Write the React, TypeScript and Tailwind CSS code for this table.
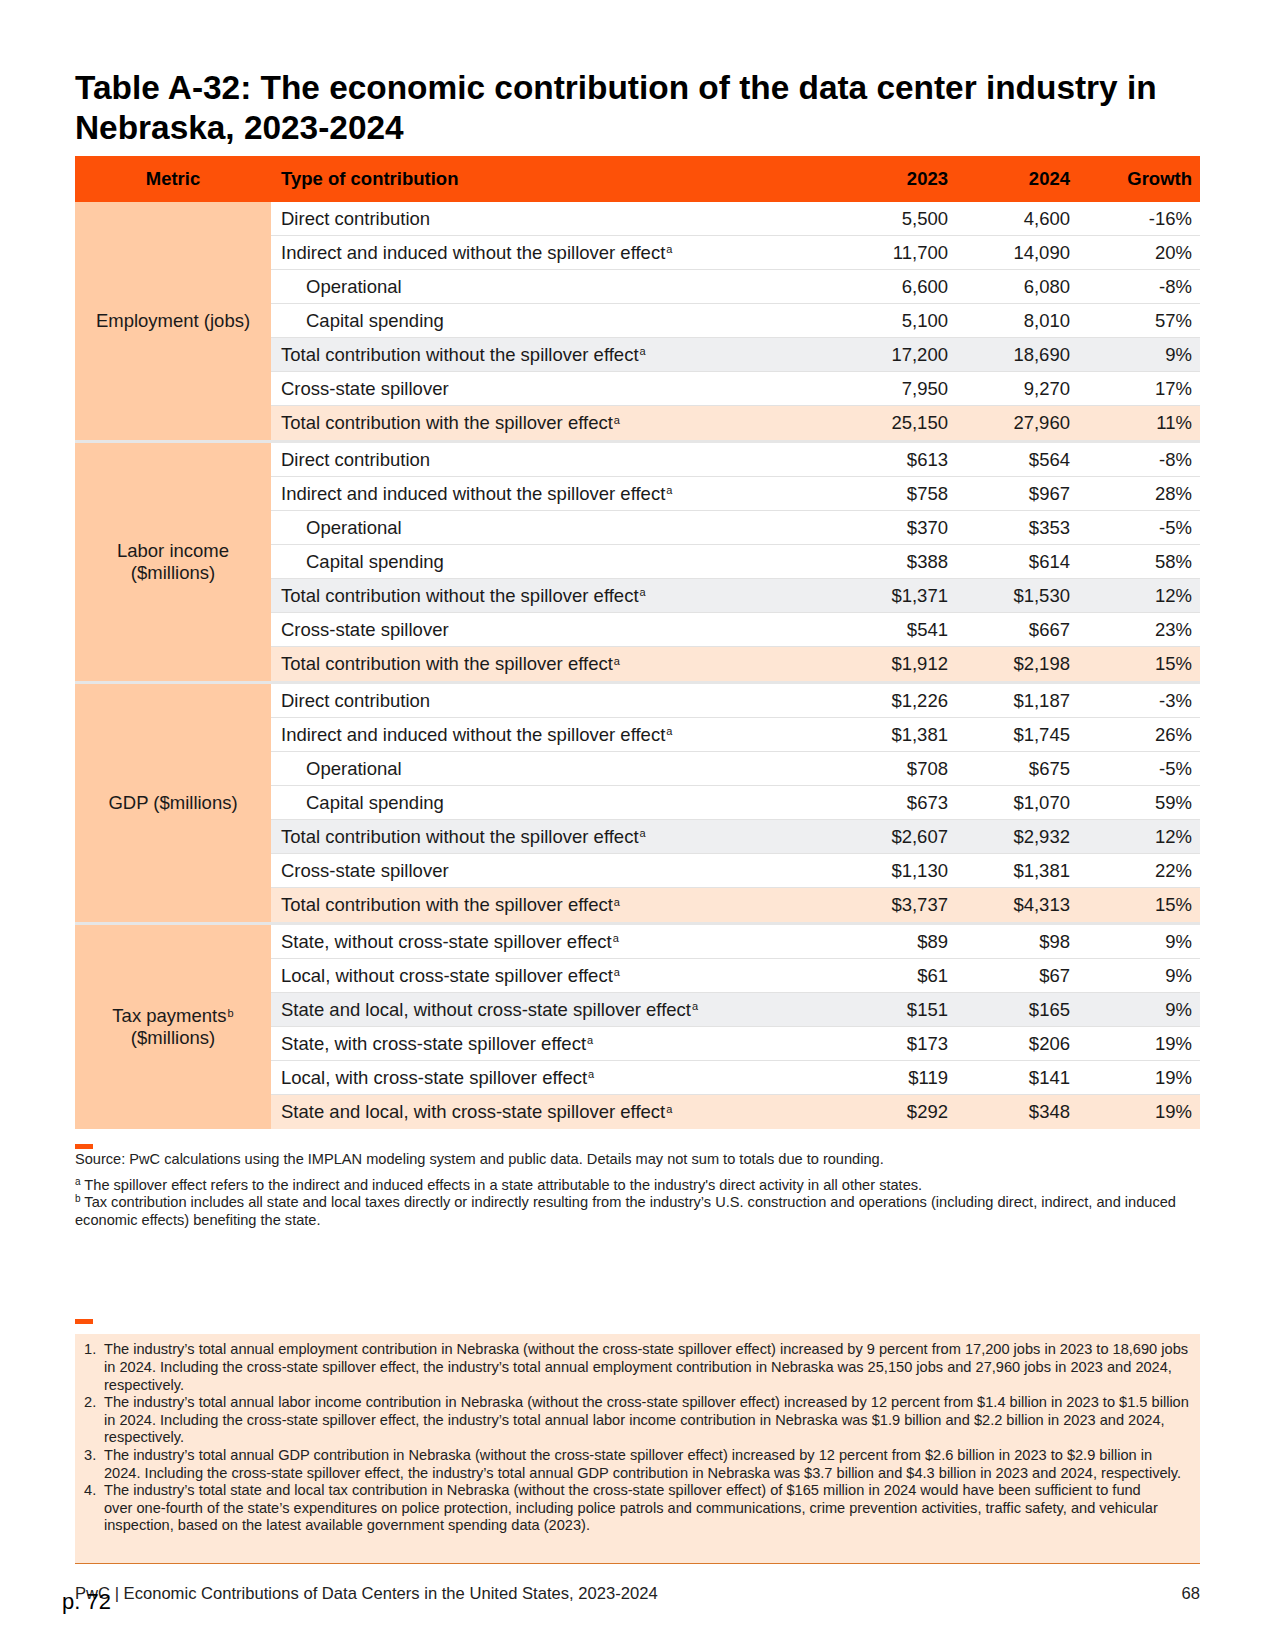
import React from 'react';

type Row = {
  label: React.ReactNode;
  v23: string;
  v24: string;
  growth: string;
  indent?: boolean;
  tone?: 'gray' | 'peach';
};

type Group = {
  metric: React.ReactNode;
  rows: Row[];
};

const A = () => <sup className="text-[11px] ml-[1px]">a</sup>;

const groups: Group[] = [
  {
    metric: 'Employment (jobs)',
    rows: [
      { label: 'Direct contribution', v23: '5,500', v24: '4,600', growth: '-16%' },
      { label: <>Indirect and induced without the spillover effect<A /></>, v23: '11,700', v24: '14,090', growth: '20%' },
      { label: 'Operational', v23: '6,600', v24: '6,080', growth: '-8%', indent: true },
      { label: 'Capital spending', v23: '5,100', v24: '8,010', growth: '57%', indent: true },
      { label: <>Total contribution without the spillover effect<A /></>, v23: '17,200', v24: '18,690', growth: '9%', tone: 'gray' },
      { label: 'Cross-state spillover', v23: '7,950', v24: '9,270', growth: '17%' },
      { label: <>Total contribution with the spillover effect<A /></>, v23: '25,150', v24: '27,960', growth: '11%', tone: 'peach' },
    ],
  },
  {
    metric: (
      <>
        Labor income
        <br />
        ($millions)
      </>
    ),
    rows: [
      { label: 'Direct contribution', v23: '$613', v24: '$564', growth: '-8%' },
      { label: <>Indirect and induced without the spillover effect<A /></>, v23: '$758', v24: '$967', growth: '28%' },
      { label: 'Operational', v23: '$370', v24: '$353', growth: '-5%', indent: true },
      { label: 'Capital spending', v23: '$388', v24: '$614', growth: '58%', indent: true },
      { label: <>Total contribution without the spillover effect<A /></>, v23: '$1,371', v24: '$1,530', growth: '12%', tone: 'gray' },
      { label: 'Cross-state spillover', v23: '$541', v24: '$667', growth: '23%' },
      { label: <>Total contribution with the spillover effect<A /></>, v23: '$1,912', v24: '$2,198', growth: '15%', tone: 'peach' },
    ],
  },
  {
    metric: 'GDP ($millions)',
    rows: [
      { label: 'Direct contribution', v23: '$1,226', v24: '$1,187', growth: '-3%' },
      { label: <>Indirect and induced without the spillover effect<A /></>, v23: '$1,381', v24: '$1,745', growth: '26%' },
      { label: 'Operational', v23: '$708', v24: '$675', growth: '-5%', indent: true },
      { label: 'Capital spending', v23: '$673', v24: '$1,070', growth: '59%', indent: true },
      { label: <>Total contribution without the spillover effect<A /></>, v23: '$2,607', v24: '$2,932', growth: '12%', tone: 'gray' },
      { label: 'Cross-state spillover', v23: '$1,130', v24: '$1,381', growth: '22%' },
      { label: <>Total contribution with the spillover effect<A /></>, v23: '$3,737', v24: '$4,313', growth: '15%', tone: 'peach' },
    ],
  },
  {
    metric: (
      <>
        Tax payments<sup className="text-[11px] ml-[1px]">b</sup>
        <br />
        ($millions)
      </>
    ),
    rows: [
      { label: <>State, without cross-state spillover effect<A /></>, v23: '$89', v24: '$98', growth: '9%' },
      { label: <>Local, without cross-state spillover effect<A /></>, v23: '$61', v24: '$67', growth: '9%' },
      { label: <>State and local, without cross-state spillover effect<A /></>, v23: '$151', v24: '$165', growth: '9%', tone: 'gray' },
      { label: <>State, with cross-state spillover effect<A /></>, v23: '$173', v24: '$206', growth: '19%' },
      { label: <>Local, with cross-state spillover effect<A /></>, v23: '$119', v24: '$141', growth: '19%' },
      { label: <>State and local, with cross-state spillover effect<A /></>, v23: '$292', v24: '$348', growth: '19%', tone: 'peach' },
    ],
  },
];

const notes: string[][] = [
  [
    'The industry’s total annual employment contribution in Nebraska (without the cross-state spillover effect) increased by 9 percent from 17,200 jobs in 2023 to 18,690 jobs',
    'in 2024. Including the cross-state spillover effect, the industry’s total annual employment contribution in Nebraska was 25,150 jobs and 27,960 jobs in 2023 and 2024,',
    'respectively.',
  ],
  [
    'The industry’s total annual labor income contribution in Nebraska (without the cross-state spillover effect) increased by 12 percent from $1.4 billion in 2023 to $1.5 billion',
    'in 2024. Including the cross-state spillover effect, the industry’s total annual labor income contribution in Nebraska was $1.9 billion and $2.2 billion in 2023 and 2024,',
    'respectively.',
  ],
  [
    'The industry’s total annual GDP contribution in Nebraska (without the cross-state spillover effect) increased by 12 percent from $2.6 billion in 2023 to $2.9 billion in',
    '2024. Including the cross-state spillover effect, the industry’s total annual GDP contribution in Nebraska was $3.7 billion and $4.3 billion in 2023 and 2024, respectively.',
  ],
  [
    'The industry’s total state and local tax contribution in Nebraska (without the cross-state spillover effect) of $165 million in 2024 would have been sufficient to fund',
    'over one-fourth of the state’s expenditures on police protection, including police patrols and communications, crime prevention activities, traffic safety, and vehicular',
    'inspection, based on the latest available government spending data (2023).',
  ],
];

function TableRow({ row, last }: { row: Row; last: boolean }) {
  const bg = row.tone === 'gray' ? 'bg-[#eeeff1]' : row.tone === 'peach' ? 'bg-[#fee6d4]' : 'bg-white';
  return (
    <div className={`flex h-[34px] items-center ${bg} ${last ? '' : 'border-b border-[#e2e2e2]'}`}>
      <div className={`flex-1 whitespace-nowrap ${row.indent ? 'pl-[35px]' : 'pl-[10px]'}`}>{row.label}</div>
      <div className="w-[122px] pr-2 text-right">{row.v23}</div>
      <div className="w-[122px] pr-2 text-right">{row.v24}</div>
      <div className="w-[122px] pr-2 text-right">{row.growth}</div>
    </div>
  );
}

export default function App() {
  return (
    <div
      className="relative w-[1275px] h-[1650px] bg-white text-[#1a1a1a] px-[75px] pt-[68px]"
      style={{ fontFamily: '"Liberation Sans", Arial, sans-serif' }}
    >
      <h1 className="text-[33.4px] leading-[40px] font-bold text-black whitespace-nowrap">
        Table A-32: The economic contribution of the data center industry in
        <br />
        Nebraska, 2023-2024
      </h1>

      {/* Table */}
      <div className="mt-[8px] text-[18.5px]">
        <div className="flex h-[46px] items-center bg-[#fd5108] font-bold text-black">
          <div className="w-[196px] text-center">Metric</div>
          <div className="flex-1 pl-[10px]">Type of contribution</div>
          <div className="w-[122px] pr-2 text-right">2023</div>
          <div className="w-[122px] pr-2 text-right">2024</div>
          <div className="w-[122px] pr-2 text-right">Growth</div>
        </div>
        {groups.map((g, gi) => (
          <div key={gi} className={`flex ${gi > 0 ? 'border-t-[3px] border-[#e6e6e6]' : ''}`}>
            <div className="w-[196px] bg-[#ffcba4] flex items-center justify-center text-center leading-[22px]">
              <div>{g.metric}</div>
            </div>
            <div className="flex-1">
              {g.rows.map((r, ri) => (
                <TableRow key={ri} row={r} last={ri === g.rows.length - 1} />
              ))}
            </div>
          </div>
        ))}
      </div>

      {/* Source and footnotes */}
      <div className="mt-[15px] w-[18px] h-[5px] bg-[#fd5108]" />
      <div className="mt-[2px] text-[14.6px] leading-[17.6px] text-[#222]">
        <p className="whitespace-nowrap">
          Source: PwC calculations using the IMPLAN modeling system and public data. Details may not sum to totals due to rounding.
        </p>
        <p className="mt-[8px] whitespace-nowrap">
          <sup className="text-[10px]">a</sup> The spillover effect refers to the indirect and induced effects in a state attributable to the industry's direct activity in all other states.
        </p>
        <p className="whitespace-nowrap">
          <sup className="text-[10px]">b</sup> Tax contribution includes all state and local taxes directly or indirectly resulting from the industry’s U.S. construction and operations (including direct, indirect, and induced
          <br />
          economic effects) benefiting the state.
        </p>
      </div>

      {/* Key findings */}
      <div className="mt-[90px] w-[18px] h-[5px] bg-[#fd5108]" />
      <div className="mt-[10px] bg-[#fee8d7] border-b border-[#d9792c] pt-[7px] pb-[28px] pl-[9px] pr-3 text-[14.6px] leading-[17.6px] text-[#222]">
        <ol className="flex flex-col">
          {notes.map((lines, i) => (
            <li key={i} className="flex">
              <span className="w-[20px] shrink-0">{i + 1}.</span>
              <span className="whitespace-nowrap">
                {lines.map((l, li) => (
                  <React.Fragment key={li}>
                    {l}
                    {li < lines.length - 1 && <br />}
                  </React.Fragment>
                ))}
              </span>
            </li>
          ))}
        </ol>
      </div>

      {/* Footer */}
      <div className="mt-[20px] flex justify-between text-[16.6px] leading-[19px] text-[#222]">
        <span>PwC | Economic Contributions of Data Centers in the United States, 2023-2024</span>
        <span>68</span>
      </div>
      <div className="absolute left-[62px] top-[1589px] text-[22px] leading-[25px] text-black">p. 72</div>
    </div>
  );
}
